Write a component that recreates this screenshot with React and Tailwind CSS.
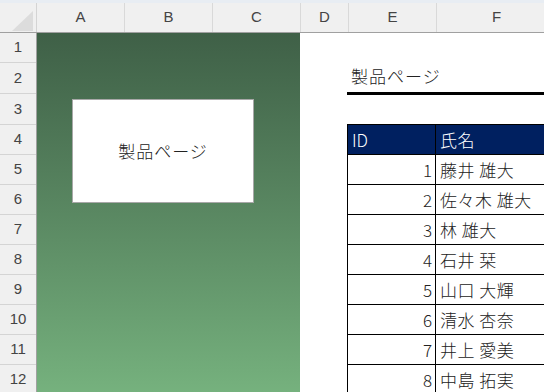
const columns = [
  { label: "A", w: "w-[88px]" },
  { label: "B", w: "w-[88px]" },
  { label: "C", w: "w-[88px]" },
  { label: "D", w: "w-[48px]" },
  { label: "E", w: "w-[88px]" },
  { label: "F", w: "w-[120px]" },
];

const rowHeights = [
  "h-[30px]",
  "h-[31px]",
  "h-[31px]",
  "h-[30px]",
  "h-[30px]",
  "h-[30px]",
  "h-[30px]",
  "h-[30px]",
  "h-[30px]",
  "h-[30px]",
  "h-[30px]",
  "h-[30px]",
];

const people = [
  { id: 1, name: "藤井 雄大" },
  { id: 2, name: "佐々木 雄大" },
  { id: 3, name: "林 雄大" },
  { id: 4, name: "石井 栞" },
  { id: 5, name: "山口 大輝" },
  { id: 6, name: "清水 杏奈" },
  { id: 7, name: "井上 愛美" },
  { id: 8, name: "中島 拓実" },
];

const jp = "font-['Noto_Sans_CJK_JP','Noto_Sans_CJK_SC',sans-serif] font-light";

export default function App() {
  return (
    <div className="w-[544px] h-[392px] overflow-hidden bg-white font-['Liberation_Sans',Arial,sans-serif]">
      <div className="h-[3px] bg-[#e8edf3]" />

      {/* column headers */}
      <div className="flex h-[30px] bg-[#f0f0f0] border-b border-[#a0a0a0]">
        <div className="w-[37px] shrink-0 border-r border-[#d4d4d4] relative">
          <svg width="36" height="29" className="absolute left-0 top-0">
            <polygon points="33,8 33,28 12,28" fill="#dcdcdc" />
          </svg>
        </div>
        {columns.map((c) => (
          <div
            key={c.label}
            className={`${c.w} shrink-0 border-r border-[#d9d9d9] flex items-center justify-center text-[15px] text-[#444]`}
          >
            {c.label}
          </div>
        ))}
      </div>

      <div className="flex">
        {/* row headers */}
        <div className="w-[37px] shrink-0 bg-[#f0f0f0] border-r border-[#a0a0a0]">
          {rowHeights.map((h, i) => (
            <div
              key={i}
              className={`${h} border-b border-[#d4d4d4] flex items-center justify-center text-[15px] text-[#444]`}
            >
              {i + 1}
            </div>
          ))}
        </div>

        {/* green panel shape */}
        <div className="w-[263px] h-[362px] shrink-0 bg-gradient-to-b from-[#3f6047] to-[#76b27e] pt-[66px] pl-[35px]">
          <div className={`w-[182px] h-[104px] bg-white border border-[#a8a8a8] flex items-center justify-center text-[17px] tracking-[1px] text-[#222] ${jp}`}>
            製品ページ
          </div>
        </div>

        {/* sheet content */}
        <div className="flex-1 overflow-hidden">
          <div className="ml-[47px] h-[62px] border-b-[3px] border-black flex items-end pl-[4px] pb-[4px]">
            <span className={`text-[17px] tracking-[1px] text-[#222] ${jp}`}>製品ページ</span>
          </div>
          <div className={`ml-[47px] mt-[29px] w-[260px] border-t border-black text-[17px] ${jp}`}>
            <div className="flex h-[30px] border-b border-black bg-[#002060] text-white">
              <div className="w-[89px] shrink-0 border-l border-r border-black flex items-center pl-[4px]">
                ID
              </div>
              <div className="flex-1 flex items-center pl-[4px] tracking-[0.5px]">氏名</div>
            </div>
            {people.map((p) => (
              <div key={p.id} className="flex h-[30px] border-b border-black text-[#222]">
                <div className="w-[89px] shrink-0 border-l border-r border-black flex items-center justify-end pr-[3px]">
                  {p.id}
                </div>
                <div className="flex-1 flex items-center pl-[4px] tracking-[0.5px]">{p.name}</div>
              </div>
            ))}
          </div>
        </div>
      </div>
    </div>
  );
}
